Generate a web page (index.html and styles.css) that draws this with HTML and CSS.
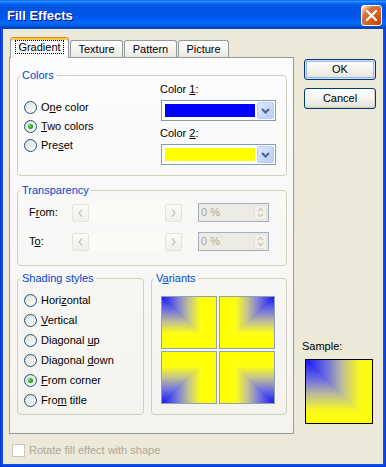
FILE: index.html
```
<!DOCTYPE html>
<html>
<head>
<meta charset="utf-8">
<title>Fill Effects</title>
<link rel="stylesheet" href="styles.css">
</head>
<body>
<div class="window">
  <div class="titlebar">
    <span class="title">Fill Effects</span>
    <div class="close"><svg width="19" height="19" viewBox="0 0 19 19"><path d="M5 5 L14 14 M14 5 L5 14" stroke="#fff" stroke-width="2.3" stroke-linecap="round"/></svg></div>
  </div>
  <div class="client">
    <div class="main">
      <div class="tabarea">
        <div class="tabs">
          <div class="tab active"><span class="focus">Gradient</span></div>
          <div class="tab t-texture">Texture</div>
          <div class="tab t-pattern">Pattern</div>
          <div class="tab t-picture">Picture</div>
        </div>
        <div class="panel">
          <fieldset class="g-colors">
            <legend>Colors</legend>
            <div class="colors-grid">
              <div class="colors-left">
                <div class="rrow"><span class="radio"></span><span>O<u>n</u>e color</span></div>
                <div class="rrow"><span class="radio on"></span><span><u>T</u>wo colors</span></div>
                <div class="rrow"><span class="radio"></span><span>Pre<u>s</u>et</span></div>
              </div>
              <div class="colors-right">
                <div class="clabel">Color <u>1</u>:</div>
                <div class="combo"><span class="swatch blue"></span><span class="ddbtn"><svg width="9" height="6" viewBox="0 0 9 6"><path d="M1 1 L4.5 4.5 L8 1" fill="none" stroke="#4D6185" stroke-width="2"/></svg></span></div>
                <div class="clabel second">Color <u>2</u>:</div>
                <div class="combo"><span class="swatch yellow"></span><span class="ddbtn"><svg width="9" height="6" viewBox="0 0 9 6"><path d="M1 1 L4.5 4.5 L8 1" fill="none" stroke="#4D6185" stroke-width="2"/></svg></span></div>
              </div>
            </div>
          </fieldset>

          <fieldset class="g-trans">
            <legend>Transparency</legend>
            <div class="trow">
              <span class="tlabel">F<u>r</u>om:</span>
              <div class="scroll">
                <span class="sb"><svg width="5" height="8" viewBox="0 0 5 8"><path d="M4 0.5 L1 4 L4 7.5" fill="none" stroke="#C9C7BA" stroke-width="1.4"/></svg></span>
                <span class="track"></span>
                <span class="sb"><svg width="5" height="8" viewBox="0 0 5 8"><path d="M1 0.5 L4 4 L1 7.5" fill="none" stroke="#C9C7BA" stroke-width="1.4"/></svg></span>
              </div>
              <div class="spin"><span class="val">0 %</span><span class="spinbtn"><svg width="13" height="15" viewBox="0 0 13 15"><rect x="0.5" y="0.5" width="12" height="14" rx="2" fill="#F3F2EC" stroke="#E4E2D8"/><path d="M4 6 L6.5 3.5 L9 6 M4 9 L6.5 11.5 L9 9" fill="none" stroke="#C9C7BA" stroke-width="1.3"/></svg></span></div>
            </div>
            <div class="trow second">
              <span class="tlabel">T<u>o</u>:</span>
              <div class="scroll">
                <span class="sb"><svg width="5" height="8" viewBox="0 0 5 8"><path d="M4 0.5 L1 4 L4 7.5" fill="none" stroke="#C9C7BA" stroke-width="1.4"/></svg></span>
                <span class="track"></span>
                <span class="sb"><svg width="5" height="8" viewBox="0 0 5 8"><path d="M1 0.5 L4 4 L1 7.5" fill="none" stroke="#C9C7BA" stroke-width="1.4"/></svg></span>
              </div>
              <div class="spin"><span class="val">0 %</span><span class="spinbtn"><svg width="13" height="15" viewBox="0 0 13 15"><rect x="0.5" y="0.5" width="12" height="14" rx="2" fill="#F3F2EC" stroke="#E4E2D8"/><path d="M4 6 L6.5 3.5 L9 6 M4 9 L6.5 11.5 L9 9" fill="none" stroke="#C9C7BA" stroke-width="1.3"/></svg></span></div>
            </div>
          </fieldset>

          <div class="bottom-groups">
            <fieldset class="g-shading">
              <legend>Shading styles</legend>
              <div class="srow"><span class="radio"></span><span>Hori<u>z</u>ontal</span></div>
              <div class="srow"><span class="radio"></span><span><u>V</u>ertical</span></div>
              <div class="srow"><span class="radio"></span><span>Diagonal <u>u</u>p</span></div>
              <div class="srow"><span class="radio"></span><span>Diagonal <u>d</u>own</span></div>
              <div class="srow"><span class="radio on"></span><span><u>F</u>rom corner</span></div>
              <div class="srow"><span class="radio"></span><span>Fro<u>m</u> title</span></div>
            </fieldset>
            <fieldset class="g-variants">
              <legend>V<u>a</u>riants</legend>
              <div class="variants">
                <div class="cell"><svg viewBox="0 0 100 100" preserveAspectRatio="none">
                  <defs>
                    <linearGradient id="vh" x1="0" y1="0" x2="1" y2="0"><stop offset="0" stop-color="#1A1AF0"/><stop offset="0.28" stop-color="#7878DC"/><stop offset="0.5" stop-color="#C4C490"/><stop offset="0.72" stop-color="#FFFF10"/><stop offset="1" stop-color="#FFFF00"/></linearGradient>
                    <linearGradient id="vv" x1="0" y1="0" x2="0" y2="1"><stop offset="0" stop-color="#1A1AF0"/><stop offset="0.28" stop-color="#7878DC"/><stop offset="0.5" stop-color="#C4C490"/><stop offset="0.72" stop-color="#FFFF10"/><stop offset="1" stop-color="#FFFF00"/></linearGradient>
                  </defs>
                  <rect width="100" height="100" fill="url(#vv)"/><polygon points="0,0 100,0 100,100" fill="url(#vh)"/></svg></div>
                <div class="cell fx"><svg viewBox="0 0 100 100" preserveAspectRatio="none"><rect width="100" height="100" fill="url(#vv)"/><polygon points="0,0 100,0 100,100" fill="url(#vh)"/></svg></div>
                <div class="cell fy"><svg viewBox="0 0 100 100" preserveAspectRatio="none"><rect width="100" height="100" fill="url(#vv)"/><polygon points="0,0 100,0 100,100" fill="url(#vh)"/></svg></div>
                <div class="cell fxy"><svg viewBox="0 0 100 100" preserveAspectRatio="none"><rect width="100" height="100" fill="url(#vv)"/><polygon points="0,0 100,0 100,100" fill="url(#vh)"/></svg></div>
              </div>
            </fieldset>
          </div>
        </div>
      </div>
      <div class="side">
        <div class="btn ok">OK</div>
        <div class="btn cancel">Cancel</div>
        <div class="sample">
          <div class="sample-label">Sample:</div>
          <div class="sample-box"><svg viewBox="0 0 100 100" preserveAspectRatio="none">
            <defs>
              <linearGradient id="sh" x1="0" y1="0" x2="1" y2="0"><stop offset="0" stop-color="#1414F6"/><stop offset="0.32" stop-color="#7070E0"/><stop offset="0.55" stop-color="#BEBE98"/><stop offset="0.8" stop-color="#F8F820"/><stop offset="1" stop-color="#FFFF00"/></linearGradient>
              <linearGradient id="sv" x1="0" y1="0" x2="0" y2="1"><stop offset="0" stop-color="#1414F6"/><stop offset="0.32" stop-color="#7070E0"/><stop offset="0.55" stop-color="#BEBE98"/><stop offset="0.8" stop-color="#F8F820"/><stop offset="1" stop-color="#FFFF00"/></linearGradient>
            </defs>
            <rect width="100" height="100" fill="url(#sv)"/><polygon points="0,0 100,0 100,100" fill="url(#sh)"/></svg></div>
        </div>
      </div>
    </div>
    <div class="rotate"><span class="check"></span><span>Rotate fill effect with shape</span></div>
  </div>
</div>
</body>
</html>
```
FILE: styles.css
```
* { box-sizing: border-box; }
html, body { margin: 0; padding: 0; }
body {
  width: 386px;
  height: 467px;
  overflow: hidden;
  font-family: "Liberation Sans", Arial, sans-serif;
  font-size: 11px;
  line-height: 13px;
  color: #000;
  background: #0A50E2;
}
u { text-decoration-thickness: 1px; text-underline-offset: 1px; }

.window {
  width: 386px;
  height: 467px;
  display: flex;
  flex-direction: column;
  background: #0A50E2;
  box-shadow: inset 1px 0 #0831D9, inset -1px 0 #0831D9, inset 0 -1px #0831D9;
}

.titlebar {
  height: 29px;
  flex: none;
  display: flex;
  align-items: flex-start;
  padding: 0 4px 0 7px;
  background: linear-gradient(to bottom, #0058EE 0%, #3593FF 4%, #288EFF 6%, #127DFF 8%, #036FFC 10%, #0262EE 14%, #0057E5 20%, #0054E3 24%, #0055EB 56%, #005BF5 66%, #026AFE 76%, #0062EF 86%, #0052D6 92%, #0040AB 96%, #0A4BD8 100%);
}
.title {
  flex: 1;
  margin-top: 8px;
  font-weight: bold;
  font-size: 13px;
  line-height: 15px;
  color: #fff;
  text-shadow: 1px 1px #0F1089;
}
.close {
  width: 21px;
  height: 21px;
  margin-top: 5px;
  border: 1px solid #fff;
  border-radius: 3px;
  background: radial-gradient(circle at 90% 90%, #CC4600 0%, #DC6527 55%, #CD7546 70%, #FFCCB2 90%, #fff 100%);
  display: flex;
  align-items: center;
  justify-content: center;
}
.close svg { display: block; }

.client {
  flex: 1;
  margin: 0 3px 3px 3px;
  background: #ECE9D8;
  padding: 8px 0 0 6px;
}
.main { display: flex; }
.tabarea { width: 285px; }

.tabs {
  display: flex;
  align-items: flex-end;
  height: 20px;
  padding-left: 1px;
  position: relative;
  z-index: 1;
}
.tab {
  height: 17px;
  margin-left: 1px;
  padding-top: 1px;
  border: 1px solid #919B9C;
  border-bottom: none;
  border-radius: 3px 3px 0 0;
  background: linear-gradient(#FFFFFF, #F4F3EF 60%, #EAE8E1);
  display: flex;
  align-items: center;
  justify-content: center;
}
.tab.active {
  width: 59px;
  height: 21px;
  margin-left: 0;
  margin-bottom: -1px;
  padding-top: 0;
  padding-bottom: 2px;
  background: #FCFCFE;
  border-top: 1px solid #E68B2C;
  box-shadow: inset 0 2px #FFC73C;
}
.t-texture { width: 53px; }
.t-pattern { width: 53px; }
.t-picture { width: 51px; }
.focus {
  display: inline-block;
  line-height: 12px;
  padding: 0 2px;
  border: 1px dotted #000;
}

.panel {
  height: 377px;
  border: 1px solid #919B9C;
  background: linear-gradient(#FCFCFE, #F4F3EE);
  padding: 11px 6px 0 7px;
}

fieldset {
  margin: 0;
  min-width: 0;
  padding: 0 10px 9px 7px;
  border: 1px solid #D0D0BF;
  border-radius: 4px;
}
legend {
  padding: 0 2px;
  margin-left: -5px;
  line-height: 13px;
  color: #0046D5;
}

.g-colors { padding-bottom: 10px; }
.colors-grid { display: grid; grid-template-columns: 135px 116px; }
.colors-left { padding-top: 16px; }
.colors-right { padding-top: 1px; }
.rrow { height: 19px; display: flex; align-items: center; }
.srow { height: 20px; display: flex; align-items: center; }

.radio {
  width: 13px;
  height: 13px;
  margin: 0 4px 0 -1px;
  border: 1px solid #1C5180;
  border-radius: 50%;
  background: linear-gradient(135deg, #DCDCD7, #FFFFFF);
  display: flex;
  align-items: center;
  justify-content: center;
  flex: none;
}
.radio.on::after {
  content: "";
  width: 5px;
  height: 5px;
  border-radius: 50%;
  background: radial-gradient(circle at 35% 35%, #6BDD66, #21A121 60%, #1A8A1A);
}

.clabel { height: 13px; }
.clabel.second { margin-top: 6px; }
.combo {
  display: flex;
  width: 115px;
  height: 21px;
  margin: 4px 0 0 1px;
  padding: 1px;
  border: 1px solid #7F9DB9;
  background: #fff;
}
.swatch { flex: 1; margin: 2px 2px 2px 2px; }
.swatch.blue { background: #0000FF; }
.swatch.yellow { background: #FFFF00; }
.ddbtn {
  width: 17px;
  border: 1px solid #BACBF3;
  border-radius: 2px;
  background: linear-gradient(135deg, #DDE8FE, #B8CCF8);
  display: flex;
  align-items: center;
  justify-content: center;
}
.ddbtn svg { display: block; }

.g-trans { margin-top: 8px; padding-top: 6px; padding-bottom: 14px; }
.trow { display: flex; align-items: center; height: 19px; padding-left: 4px; }
.trow.second { margin-top: 10px; }
.tlabel { width: 43px; flex: none; }
.scroll {
  width: 110px;
  height: 18px;
  display: flex;
  background: #FAFAF7;
}
.sb {
  width: 17px;
  height: 18px;
  border: 1px solid #E6E4DA;
  border-radius: 2px;
  background: linear-gradient(#FBFBF8, #F0EFE9);
  display: flex;
  align-items: center;
  justify-content: center;
}
.sb svg { display: block; }
.track { flex: 1; }
.spin {
  width: 71px;
  height: 19px;
  margin-left: 16px;
  padding: 0 1px 0 2px;
  border: 1px solid #A3AFC0;
  background: #EDECE4;
  color: #ACA899;
  display: flex;
  align-items: center;
}
.spin .val { flex: 1; }
.spinbtn svg { display: block; }

.bottom-groups { display: flex; gap: 7px; margin-top: 6px; }
.g-shading { width: 127px; padding-top: 5px; padding-bottom: 4px; }
.g-variants { width: 136px; }
.variants {
  display: grid;
  grid-template-columns: 56px 56px;
  grid-template-rows: 53px 53px;
  gap: 2px;
  margin: 11px 0 0 2px;
}
.cell { border: 1px solid #8EA2BB; }
.cell svg { display: block; width: 100%; height: 100%; }
.cell.fx svg { transform: scaleX(-1); }
.cell.fy svg { transform: scaleY(-1); }
.cell.fxy svg { transform: scale(-1, -1); }

.side {
  width: 72px;
  margin-left: 10px;
  display: flex;
  flex-direction: column;
}
.btn {
  height: 21px;
  border: 1px solid #003C74;
  border-radius: 3px;
  background: linear-gradient(#FFFFFF, #F5F4F0 45%, #E9E7DF 85%, #D8D3C8);
  display: flex;
  align-items: center;
  justify-content: center;
}
.ok { margin-top: 22px; box-shadow: inset 0 0 0 1px #CEE0FB, inset 0 0 0 2px #9CBBEA; }
.cancel { margin-top: 8px; box-shadow: inset -1px -1px #D6D0C5; }
.sample { margin-top: auto; margin-bottom: 10px; }
.sample-label { margin-left: -2px; height: 13px; }
.sample-box {
  width: 68px;
  height: 65px;
  margin: 6px 0 0 1px;
  border: 1px solid #000;
}
.sample-box svg { display: block; width: 100%; height: 100%; }

.rotate {
  display: flex;
  align-items: center;
  height: 13px;
  margin: 10px 0 0 3px;
  color: #ACA899;
}
.check {
  width: 13px;
  height: 13px;
  margin-right: 4px;
  border: 1px solid #CAC8BB;
  background: #FDFDFB;
}
```
